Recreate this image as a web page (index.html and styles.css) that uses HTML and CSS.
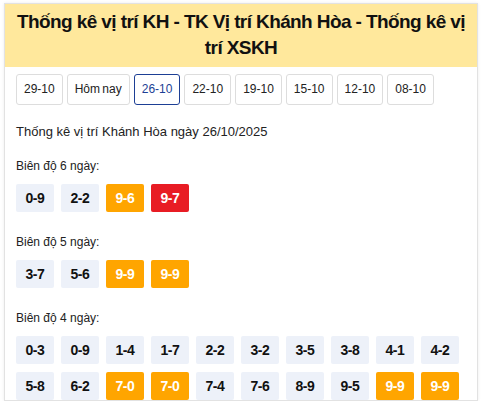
FILE: index.html
```html
<!DOCTYPE html>
<html lang="vi">
<head>
<meta charset="utf-8">
<link rel="stylesheet" href="styles.css">
</head>
<body>
<div class="card">
  <h1 class="title">Thống kê vị trí KH - TK Vị trí Khánh Hòa - Thống kê vị trí XSKH</h1>
  <div class="body">
    <div class="dates">
      <a class="date">29-10</a>
      <a class="date">Hôm nay</a>
      <a class="date active">26-10</a>
      <a class="date">22-10</a>
      <a class="date">19-10</a>
      <a class="date">15-10</a>
      <a class="date">12-10</a>
      <a class="date">08-10</a>
    </div>
    <p class="lead">Thống kê vị trí Khánh Hòa ngày 26/10/2025</p>
    <div class="group">
      <p class="label">Biên độ 6 ngày:</p>
      <div class="pairs">
        <span class="pair">0-9</span>
        <span class="pair">2-2</span>
        <span class="pair orange">9-6</span>
        <span class="pair red">9-7</span>
      </div>
    </div>
    <div class="group">
      <p class="label">Biên độ 5 ngày:</p>
      <div class="pairs">
        <span class="pair">3-7</span>
        <span class="pair">5-6</span>
        <span class="pair orange">9-9</span>
        <span class="pair orange">9-9</span>
      </div>
    </div>
    <div class="group">
      <p class="label">Biên độ 4 ngày:</p>
      <div class="pairs">
        <span class="pair">0-3</span>
        <span class="pair">0-9</span>
        <span class="pair">1-4</span>
        <span class="pair">1-7</span>
        <span class="pair">2-2</span>
        <span class="pair">3-2</span>
        <span class="pair">3-5</span>
        <span class="pair">3-8</span>
        <span class="pair">4-1</span>
        <span class="pair">4-2</span>
        <span class="pair">5-8</span>
        <span class="pair">6-2</span>
        <span class="pair orange">7-0</span>
        <span class="pair orange">7-0</span>
        <span class="pair">7-4</span>
        <span class="pair">7-6</span>
        <span class="pair">8-9</span>
        <span class="pair">9-5</span>
        <span class="pair orange">9-9</span>
        <span class="pair orange">9-9</span>
      </div>
    </div>
  </div>
</div>
</body>
</html>
```
FILE: styles.css
```css
html, body {
  margin: 0;
  padding: 0;
  background: #fff;
}
body {
  padding: 3px 6px 0 4px;
  font-family: "Liberation Sans", Arial, sans-serif;
  color: #222;
}
.card {
  border: 1px solid #e2e2e2;
  box-shadow: 0 0 3px rgba(0,0,0,0.08);
  background: #fff;
}
.title {
  margin: 0;
  background: #ffe89c;
  text-align: center;
  font-size: 19px;
  letter-spacing: -0.6px;
  line-height: 26px;
  font-weight: bold;
  color: #111;
  padding: 5px 10px 6px;
}
.body {
  padding: 7px 11px 0;
}
.dates {
  display: flex;
  flex-wrap: wrap;
  gap: 4px;
}
.date {
  display: block;
  border: 1px solid #ddd;
  border-radius: 3px;
  padding: 7px 7px;
  font-size: 12px;
  line-height: 15px;
  word-spacing: -1px;
  color: #222;
}
.date.active {
  border-color: #1d3f95;
  color: #1d3f95;
}
.lead {
  margin: 19px 0 0;
  font-size: 13px;
  line-height: 16px;
}
.label {
  margin: 18px 0 0;
  font-size: 12px;
  line-height: 16px;
}
.pairs {
  display: flex;
  flex-wrap: wrap;
  gap: 8px 7px;
  margin-top: 10px;
}
.pair {
  width: 38px;
  height: 28px;
  display: flex;
  align-items: center;
  justify-content: center;
  background: #edf1f9;
  border-radius: 2px;
  font-size: 14px;
  letter-spacing: -0.4px;
  font-weight: bold;
  color: #111;
}
.pair.orange {
  background: #ffa500;
  color: #fff;
}
.pair.red {
  background: #e81c24;
  color: #fff;
}
.group + .group .label {
  margin-top: 22px;
}
```
